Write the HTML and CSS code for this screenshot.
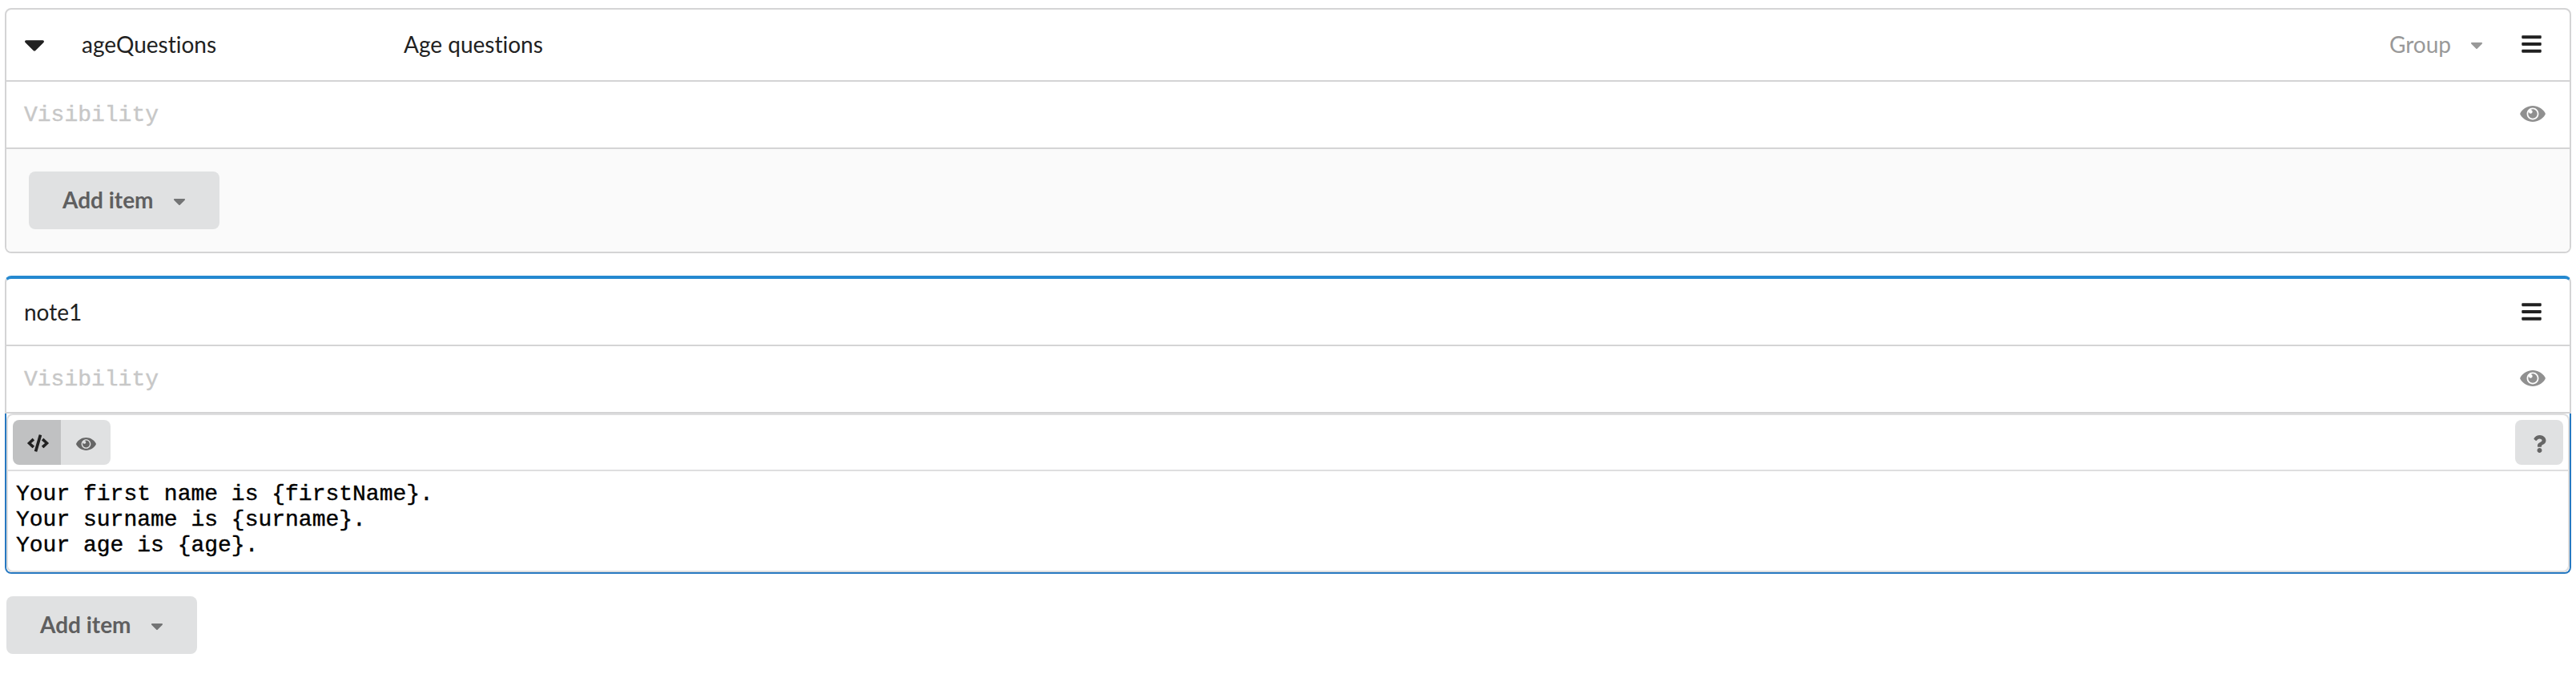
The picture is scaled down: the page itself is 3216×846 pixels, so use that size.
FILE: index.html
```html
<!DOCTYPE html>
<html lang="en">
<head>
<meta charset="utf-8">
<title>Form composer</title>
<link rel="stylesheet" href="styles.css">
</head>
<body>
<svg class="defs" width="0" height="0">
  <symbol id="caret" viewBox="11 192 298 169"><path d="M31.3 192h257.3c17.8 0 26.7 21.5 14.1 34.1L174.1 354.7c-7.8 7.8-20.5 7.8-28.3 0L17.2 226.1C4.6 213.5 13.5 192 31.3 192z"/></symbol>
  <symbol id="bars" viewBox="0 0 448 512"><path d="M16 132h416c8.837 0 16-7.163 16-16V76c0-8.837-7.163-16-16-16H16C7.163 60 0 67.163 0 76v40c0 8.837 7.163 16 16 16zm0 160h416c8.837 0 16-7.163 16-16v-40c0-8.837-7.163-16-16-16H16c-8.837 0-16 7.163-16 16v40c0 8.837 7.163 16 16 16zm0 160h416c8.837 0 16-7.163 16-16v-40c0-8.837-7.163-16-16-16H16c-8.837 0-16 7.163-16 16v40c0 8.837 7.163 16 16 16z"/></symbol>
  <symbol id="eye" viewBox="0 0 576 512"><path d="M569.354 231.631C512.969 135.949 407.81 72 288 72 168.14 72 63.004 135.994 6.646 231.631a47.999 47.999 0 0 0 0 48.739C63.031 376.051 168.19 440 288 440c119.86 0 224.996-63.994 281.354-159.631a47.997 47.997 0 0 0 0-48.738zM288 392c-75.162 0-136-60.827-136-136 0-75.162 60.826-136 136-136 75.162 0 136 60.826 136 136 0 75.162-60.826 136-136 136zm104-136c0 57.438-46.562 104-104 104s-104-46.562-104-104c0-17.708 4.431-34.379 12.236-48.973l-.001.032c0 23.651 19.173 42.823 42.824 42.823s42.824-19.173 42.824-42.823c0-23.651-19.173-42.824-42.824-42.824l-.032.001C253.621 156.431 270.292 152 288 152c57.438 0 104 46.562 104 104z"/></symbol>
  <symbol id="code" viewBox="0 0 640 512"><path d="M278.9 511.5l-61-17.7c-6.4-1.8-10-8.5-8.2-14.9L346.2 8.7c1.8-6.4 8.5-10 14.9-8.2l61 17.7c6.4 1.8 10 8.5 8.2 14.9L293.8 503.3c-1.9 6.4-8.5 10.1-14.9 8.2zm-114-112.2l43.5-46.4c4.6-4.9 4.3-12.7-.8-17.2L117 256l90.6-79.7c5.1-4.5 5.5-12.3.8-17.2l-43.5-46.4c-4.5-4.8-12.1-5.1-17-.5L3.8 247.2c-5.1 4.7-5.1 12.8 0 17.5l144.1 135.1c4.9 4.6 12.5 4.4 17-.5zm327.2.6l144.1-135.1c5.1-4.7 5.1-12.8 0-17.5L492.1 112.1c-4.8-4.5-12.4-4.3-17 .5L431.6 159c-4.6 4.9-4.3 12.7.8 17.2L523 256l-90.6 79.7c-5.1 4.5-5.5 12.3-.8 17.2l43.5 46.4c4.5 4.9 12.1 5.1 17 .6z"/></symbol>
  <symbol id="question" viewBox="0 0 384 512"><path d="M202.021 0C122.202 0 70.503 32.703 29.914 91.026c-7.363 10.58-5.093 25.086 5.178 32.874l43.138 32.709c10.373 7.865 25.132 6.026 33.253-4.148 25.049-31.381 43.63-49.449 82.757-49.449 30.764 0 68.816 19.799 68.816 49.631 0 22.552-18.617 34.134-48.993 51.164-35.423 19.86-82.299 44.576-82.299 106.405V320c0 13.255 10.745 24 24 24h72.471c13.255 0 24-10.745 24-24v-5.773c0-42.86 125.268-44.645 125.268-160.627C377.504 66.256 286.902 0 202.021 0zM192 373.459c-38.196 0-69.271 31.075-69.271 69.271 0 38.195 31.075 69.27 69.271 69.27s69.271-31.075 69.271-69.271-31.075-69.27-69.271-69.27z"/></symbol>
</svg>

<section class="card group">
  <header class="row group-header">
    <svg class="toggle"><use href="#caret"/></svg>
    <span class="item-id">ageQuestions</span>
    <span class="item-label">Age questions</span>
    <span class="item-type">Group</span>
    <svg class="caret type-caret"><use href="#caret"/></svg>
    <svg class="bars"><use href="#bars"/></svg>
  </header>
  <div class="row visibility">
    <span class="placeholder">Visibility</span>
    <svg class="eye"><use href="#eye"/></svg>
  </div>
  <div class="group-body">
    <button class="add">Add item<svg class="caret"><use href="#caret"/></svg></button>
  </div>
</section>

<section class="note">
  <div class="note-head">
    <header class="row note-header">
      <span>note1</span>
      <svg class="bars"><use href="#bars"/></svg>
    </header>
    <div class="row visibility">
      <span class="placeholder">Visibility</span>
      <svg class="eye"><use href="#eye"/></svg>
    </div>
  </div>
  <div class="editor">
    <div class="editor-inner">
      <div class="toolbar">
        <div class="modes">
          <button class="tool active"><svg class="code"><use href="#code"/></svg></button>
          <button class="tool preview"><svg class="eye-small"><use href="#eye"/></svg></button>
        </div>
        <button class="tool help"><svg class="question"><use href="#question"/></svg></button>
      </div>
      <pre class="source">Your first name is {firstName}.
Your surname is {surname}.
Your age is {age}.</pre>
    </div>
  </div>
</section>

<button class="add add-root">Add item<svg class="caret"><use href="#caret"/></svg></button>
</body>
</html>
```

FILE: styles.css
```css
* { box-sizing: border-box; }

body {
  margin: 0;
  padding: 10px 6px 0;
  background: #fff;
  color: #212121;
  font: 28px/40px Lato, sans-serif;
  font-variant-ligatures: none;
}

svg { display: block; flex: none; fill: currentColor; }
.defs { position: absolute; }

button {
  border: 0;
  padding: 0;
  font: inherit;
  background: #e0e1e2;
  color: #5f5f60;
}

.card {
  height: 306px;
  border: 2px solid #d4d4d5;
  border-radius: 8px;
  overflow: hidden;
}

.row {
  display: flex;
  align-items: center;
  border-bottom: 2px solid #d4d4d5;
}

.group-header { height: 90px; padding: 0 35px 2px 23px; }
.toggle { width: 24px; height: 14px; margin-top: 4px; }
.item-id { width: 402px; margin-left: 47px; }
.item-type { margin-left: auto; color: #999; }
.caret { width: 14px; height: 8px; }
.type-caret { margin: 4px 49px 0 25px; color: #999; }
.bars { width: 25px; height: 28px; }

.visibility { height: 84px; justify-content: space-between; padding: 0 30px 0 22px; }
.placeholder {
  padding-top: 2px;
  font: 28px/40px "Liberation Mono", monospace;
  color: #c7c7c7;
  -webkit-text-stroke: 0.4px;
}
.eye { width: 32px; height: 28px; color: #909090; }
.visibility .eye { margin-bottom: 3px; }

.group-body { height: 128px; padding: 28px; background: #fafafa; }

.add {
  display: flex;
  align-items: center;
  width: 238px;
  height: 72px;
  padding: 0 0 2px 42px;
  border-radius: 8px;
  font-weight: 700;
}
.add .caret { margin: 5px 0 0 25px; color: #737475; }

.note { margin-top: 28px; }
.note-head {
  height: 172px;
  border: 2px solid #d4d4d5;
  border-top: 4px solid #2589d0;
  border-bottom: 0;
  border-radius: 8px 8px 0 0;
}
.note-header { height: 84px; justify-content: space-between; padding: 0 35px 0 22px; }

.editor {
  height: 200px;
  border: 2px solid #2779c1;
  border-top: 0;
  border-radius: 0 0 8px 8px;
}
.editor-inner {
  height: 198px;
  border: 2px solid #dededf;
  border-radius: 8px;
}
.toolbar {
  display: flex;
  justify-content: space-between;
  height: 70px;
  padding: 6px;
  border-bottom: 2px solid #dededf;
}
.modes { display: flex; }
.tool {
  display: flex;
  align-items: center;
  justify-content: center;
  width: 60px;
  height: 56px;
  color: #666;
}
.active { background: #c0c1c2; color: #212121; border-radius: 8px 0 0 8px; padding: 2px 0 0 2px; }
.preview { width: 62px; border-radius: 0 8px 8px 0; padding-top: 3px; }
.help { border-radius: 8px; padding: 3px 0 0; }
.code { width: 27px; height: 22px; }
.eye-small { width: 25px; height: 22px; }
.question { width: 17px; height: 22px; }

.source {
  margin: 0;
  padding: 13px 10px;
  color: #000;
  font: 28px/32px "Liberation Mono", monospace;
  -webkit-text-stroke: 0.4px;
}

.add-root { margin: 28px 0 0 2px; }
```
